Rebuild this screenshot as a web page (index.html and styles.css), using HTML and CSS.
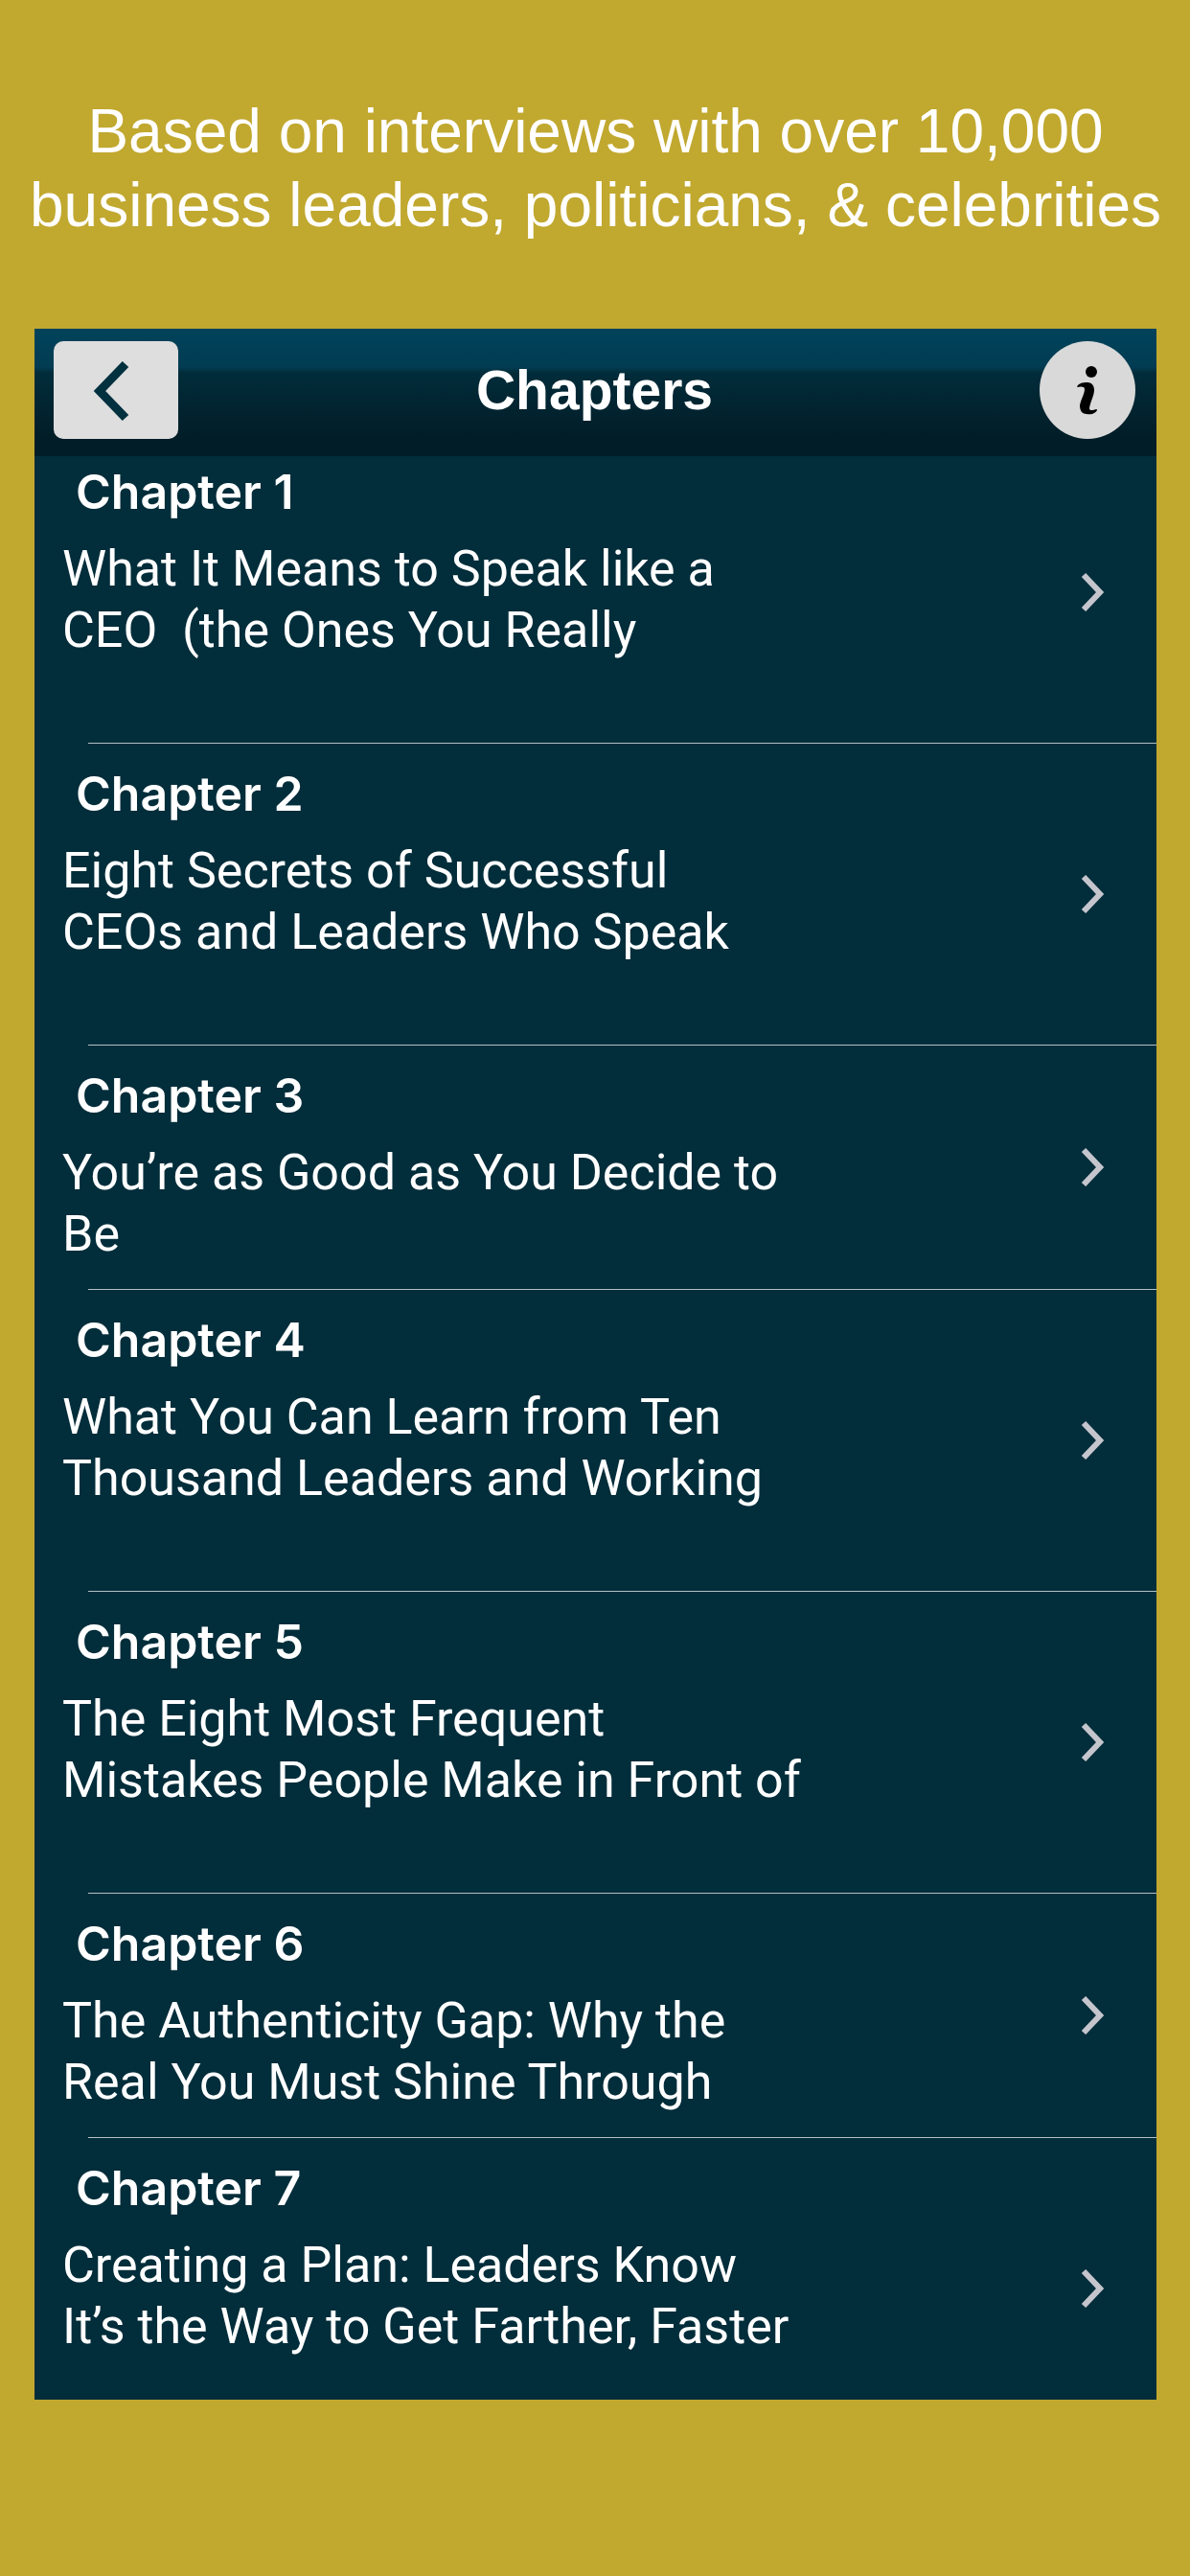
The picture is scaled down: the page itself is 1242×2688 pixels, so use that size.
FILE: index.html
```html
<!DOCTYPE html>
<html lang="en">
<head>
	<meta charset="utf-8">
	<meta name="viewport" content="width=device-width, initial-scale=1">
	<title>Chapters</title>
	<link rel="stylesheet" href="styles.css">
</head>
<body>
	<h1 class="headline">Based on interviews with over 10,000<br>business leaders, politicians, &amp; celebrities</h1>

	<main class="panel">
		<header class="navbar">
			<button type="button" class="back" aria-label="Back">
				<svg width="130" height="102" viewBox="0 0 130 102">
					<path d="M75 24 L48 52 L75 80" fill="none" stroke="#01303f" stroke-width="9"/>
				</svg>
			</button>
			<h2 class="navbar-title">Chapters</h2>
			<button type="button" class="info" aria-label="Information">
				<svg width="100" height="102" viewBox="0 0 100 102">
					<circle cx="54" cy="32" r="6"/>
					<path d="M39 48 C40 44 45 43 50 43 C55 43 57 47 57 51 C57 57 53 63 52 70 C52 73 55 72 60 71 C60 75 54 77 49 76 C44 76 42 72 42 67 C43 61 47 55 47 50 C47 47 43 47 39 48 Z"/>
				</svg>
			</button>
		</header>

		<ul class="chapters">
			<li class="chapter">
				<a href="#chapter-1" class="chapter-link">
					<h3>Chapter 1</h3>
					<p class="long">What It Means to Speak like a<br>CEO&nbsp; (the Ones You Really</p>
					<svg class="arrow" width="24" height="40" viewBox="0 0 24 40"><path d="M3 2 L20 20 L3 38"/></svg>
				</a>
			</li>
			<li class="chapter">
				<a href="#chapter-2" class="chapter-link">
					<h3>Chapter 2</h3>
					<p class="long">Eight Secrets of Successful<br>CEOs and Leaders Who Speak</p>
					<svg class="arrow" width="24" height="40" viewBox="0 0 24 40"><path d="M3 2 L20 20 L3 38"/></svg>
				</a>
			</li>
			<li class="chapter">
				<a href="#chapter-3" class="chapter-link">
					<h3>Chapter 3</h3>
					<p>You’re as Good as You Decide to<br>Be</p>
					<svg class="arrow" width="24" height="40" viewBox="0 0 24 40"><path d="M3 2 L20 20 L3 38"/></svg>
				</a>
			</li>
			<li class="chapter">
				<a href="#chapter-4" class="chapter-link">
					<h3>Chapter 4</h3>
					<p class="long">What You Can Learn from Ten<br>Thousand Leaders and Working</p>
					<svg class="arrow" width="24" height="40" viewBox="0 0 24 40"><path d="M3 2 L20 20 L3 38"/></svg>
				</a>
			</li>
			<li class="chapter">
				<a href="#chapter-5" class="chapter-link">
					<h3>Chapter 5</h3>
					<p class="long">The Eight Most Frequent<br>Mistakes People Make in Front of</p>
					<svg class="arrow" width="24" height="40" viewBox="0 0 24 40"><path d="M3 2 L20 20 L3 38"/></svg>
				</a>
			</li>
			<li class="chapter">
				<a href="#chapter-6" class="chapter-link">
					<h3>Chapter 6</h3>
					<p>The Authenticity Gap: Why the<br>Real You Must Shine Through</p>
					<svg class="arrow" width="24" height="40" viewBox="0 0 24 40"><path d="M3 2 L20 20 L3 38"/></svg>
				</a>
			</li>
			<li class="chapter">
				<a href="#chapter-7" class="chapter-link">
					<h3>Chapter 7</h3>
					<p class="long">Creating a Plan: Leaders Know<br>It’s the Way to Get Farther, Faster</p>
					<svg class="arrow" width="24" height="40" viewBox="0 0 24 40"><path d="M3 2 L20 20 L3 38"/></svg>
				</a>
			</li>
		</ul>
	</main>
</body>
</html>
```

FILE: styles.css
```css
* {
	margin: 0;
	padding: 0;
	box-sizing: border-box;
}

body {
	display: flex;
	flex-direction: column;
	height: 100vh;
	padding: 99px 35px 184px 36px;
	background-color: #c1a82f;
	color: #fff;
	font-family: Roboto, "Liberation Sans", sans-serif;
}

.headline {
	margin: 0 -36px 90px;
	font: 400 64px/77px "Liberation Sans", Arial, sans-serif;
	text-align: center;
	white-space: nowrap;
}

.panel {
	display: flex;
	flex: 1;
	flex-direction: column;
	min-height: 0;
	overflow: hidden;
	background-color: #022d3a;
}

/* top bar */
.navbar {
	display: grid;
	grid-template-columns: 1fr auto 1fr;
	flex: none;
	align-items: start;
	padding: 13px 22px 18px 20px;
	background: linear-gradient(#01435b 0, #013c52 40px, #022c3a 46px, #011d27 115px, #011d27 100%);
}

.back,
.info {
	height: 102px;
	border: 0;
	cursor: pointer;
}

.back {
	width: 130px;
	border-radius: 10px;
	background-color: #dedede;
}

.info {
	justify-self: end;
	width: 100px;
	border-radius: 50%;
	background-color: #d9d9d9;
}

.back svg,
.info svg {
	display: block;
}

.navbar-title {
	font: 700 57px/102px "Liberation Sans", Arial, sans-serif;
}

/* the list is scrolled a little: first and last rows are cut */
.chapters {
	flex: 1;
	min-height: 0;
	overflow: hidden;
	list-style: none;
}

.chapter:first-child {
	margin-top: -15px;
}

.chapter-link {
	display: grid;
	grid-template-columns: 1fr auto;
	align-items: center;
	padding: 21px 55px 21px 29px;
	color: #fff;
	text-decoration: none;
}

.chapter h3 {
	grid-column: 1;
	padding-left: 14px;
	font-family: Inter, "Liberation Sans", sans-serif;
	font-size: 50px;
	font-weight: 600;
	line-height: 62px;
}

.chapter p {
	grid-column: 1;
	margin-top: 18px;
	padding-bottom: 4px;
	font-size: 52px;
	line-height: 64px;
	white-space: nowrap;
}

.chapter .long {
	min-height: 192px;
}

.arrow {
	grid-row: 1 / 3;
	grid-column: 2;
	fill: none;
	stroke: #c5c5cd;
	stroke-width: 6;
}

/* separator, inset from the left */
.chapter:not(:last-child)::after {
	content: "";
	display: block;
	height: 1px;
	margin-left: 56px;
	background-color: #b3c1c5;
}
```
